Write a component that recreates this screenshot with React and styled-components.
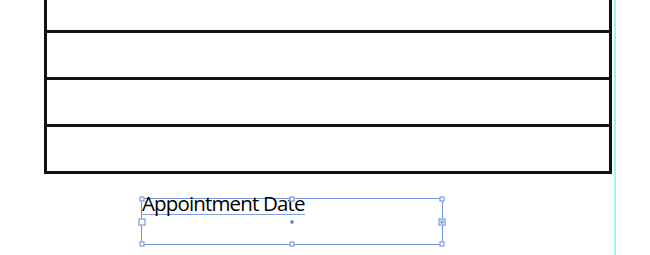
import React from "react";
import styled, { createGlobalStyle } from "styled-components";

const Global = createGlobalStyle`
  html, body { margin: 0; padding: 0; background: #fff; }
  body { width: 650px; height: 255px; overflow: hidden; }
`;

const Canvas = styled.div`
  position: relative;
  width: 650px;
  height: 255px;
  background: #fff;
  overflow: hidden;
`;

const Table = styled.div`
  margin-left: 44px;
  width: 562px;
  border-left: 3px solid #111;
  border-right: 3px solid #111;
  display: flex;
  flex-direction: column;
`;

const Row = styled.div`
  height: ${(p) => p.$h}px;
  border-bottom: 3px solid #111;
`;

const Guide = styled.div`
  position: absolute;
  top: 0;
  bottom: 0;
  left: 614px;
  width: 2px;
  background: #9ff3f3;
`;

const Frame = styled.div`
  position: relative;
  margin: 24px 0 0 141px;
  width: 300px;
  height: 45px;
  border: 1px solid #6f93dc;
`;

const Label = styled.span`
  position: absolute;
  left: 0;
  top: -6px;
  font-family: "Open Sans", "Noto Sans", sans-serif;
  font-size: 20.5px;
  letter-spacing: -0.85px;
  color: #000;
  line-height: 21px;
  border-bottom: 1px solid #7f9fe0;
  white-space: nowrap;
`;

const Handle = styled.div`
  position: absolute;
  width: ${(p) => (p.$big ? 7 : 5)}px;
  height: ${(p) => (p.$big ? 7 : 5)}px;
  border: 1px solid #5b86d8;
  background: #fff;
  transform: translate(-50%, -50%);
  box-sizing: border-box;
  left: ${(p) => p.$x}%;
  top: ${(p) => p.$y}%;
  &::after {
    content: "";
    display: ${(p) => (p.$inner ? "block" : "none")};
    position: absolute;
    inset: 1px;
    border: 1px solid #5b86d8;
  }
`;

const Center = styled.div`
  position: absolute;
  left: 50%;
  top: 50%;
  width: 3px;
  height: 3px;
  background: #4a78d0;
  transform: translate(-50%, -50%);
`;

export default function App() {
  return (
    <>
      <Global />
      <Canvas>
        <Table>
          <Row $h={30} />
          <Row $h={44} />
          <Row $h={44} />
          <Row $h={44} />
        </Table>
        <Frame>
          <Label>Appointment Date</Label>
          <Handle $x={0} $y={0} />
          <Handle $x={50} $y={0} />
          <Handle $x={100} $y={0} />
          <Handle $x={0} $y={50} $big />
          <Handle $x={100} $y={50} $big $inner />
          <Handle $x={0} $y={100} />
          <Handle $x={50} $y={100} />
          <Handle $x={100} $y={100} />
          <Center />
        </Frame>
        <Guide />
      </Canvas>
    </>
  );
}
